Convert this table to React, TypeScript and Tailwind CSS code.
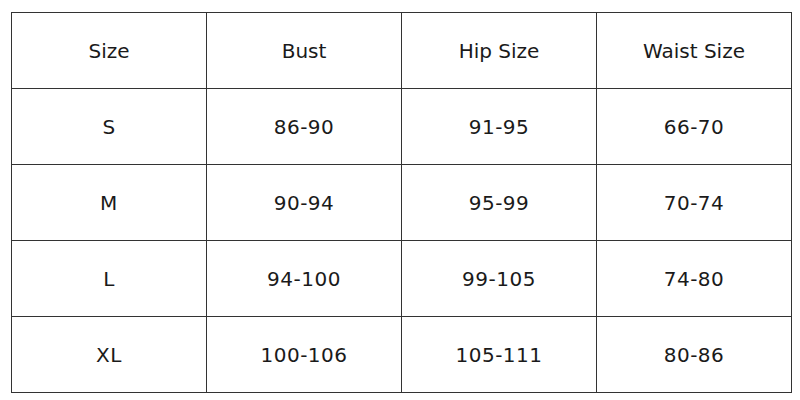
const headers = ['Size', 'Bust', 'Hip Size', 'Waist Size']

const rows = [
  ['S', '86-90', '91-95', '66-70'],
  ['M', '90-94', '95-99', '70-74'],
  ['L', '94-100', '99-105', '74-80'],
  ['XL', '100-106', '105-111', '80-86'],
]

export default function App() {
  return (
    <div className="w-[800px] h-[400px] bg-white pl-[11px] pt-[12px] font-['DejaVu_Sans',sans-serif] text-[#1a1a1a]">
      <div className="grid grid-cols-[repeat(4,194px)] grid-rows-[repeat(5,75px)] gap-px p-px bg-[#333333] w-fit">
        {headers.map((h) => (
          <div key={h} className="bg-white flex items-center justify-center text-[20px]">
            {h}
          </div>
        ))}
        {rows.flat().map((cell, i) => (
          <div key={i} className="bg-white flex items-center justify-center text-[20px] tracking-[0.5px]">
            {cell}
          </div>
        ))}
      </div>
    </div>
  )
}
